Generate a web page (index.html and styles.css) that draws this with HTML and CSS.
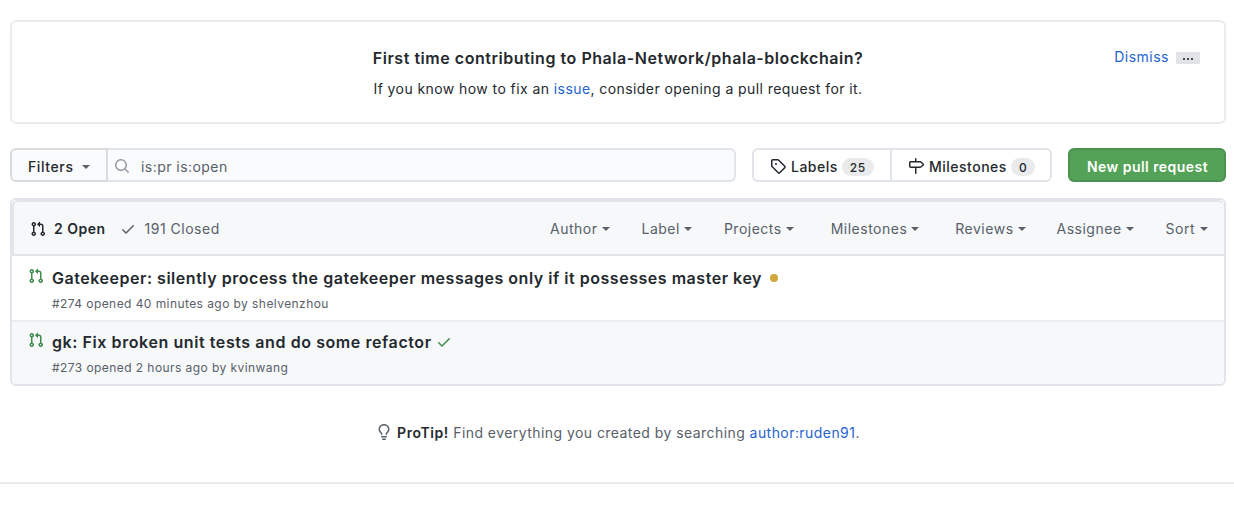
FILE: index.html
```
<!DOCTYPE html>
<html lang="en">
<head>
    <meta charset="UTF-8">
    <meta name="viewport" content="width=device-width, initial-scale=1.0">
    <title>Pull requests · Phala-Network/phala-blockchain</title>
    <link rel="stylesheet" href="styles.css">
</head>
<body>
    <!-- Shared icons -->
    <svg class="sprite" width="0" height="0">
        <symbol id="icon-pr" viewBox="0 0 16 16"><path fill-rule="evenodd" d="M7.177 3.073L9.573.677A.25.25 0 0110 .854v4.792a.25.25 0 01-.427.177L7.177 3.427a.25.25 0 010-.354zM3.75 2.5a.75.75 0 100 1.5.75.75 0 000-1.5zm-2.25.75a2.25 2.25 0 113 2.122v5.256a2.251 2.251 0 11-1.5 0V5.372A2.25 2.25 0 011.5 3.25zM11 2.5h-1V4h1a1 1 0 011 1v5.628a2.251 2.251 0 101.5 0V5A2.5 2.5 0 0011 2.5zm1 10.25a.75.75 0 111.5 0 .75.75 0 01-1.5 0zM3.75 12a.75.75 0 100 1.5.75.75 0 000-1.5z"/></symbol>
        <symbol id="icon-check" viewBox="0 0 16 16"><path fill-rule="evenodd" d="M13.78 4.22a.75.75 0 010 1.06l-7.25 7.25a.75.75 0 01-1.06 0L2.22 9.28a.75.75 0 011.06-1.06L6 10.94l6.72-6.72a.75.75 0 011.06 0z"/></symbol>
    </svg>

    <div class="container">
        <div class="notice">
            <h3 class="notice-title">First time contributing to Phala-Network/phala-blockchain?</h3>
            <p class="notice-text">If you know how to fix an <a href="#">issue</a>, consider opening a pull request for it.</p>
            <div class="notice-actions">
                <a href="#">Dismiss</a>
                <button type="button" class="expander" aria-label="More"><i></i><i></i><i></i></button>
            </div>
        </div>

        <div class="toolbar">
            <div class="search">
                <button type="button" class="btn-filters">Filters <span class="caret"></span></button>
                <div class="search-field">
                    <svg class="icon" viewBox="0 0 16 16"><path fill-rule="evenodd" d="M11.5 7a4.499 4.499 0 11-8.998 0A4.499 4.499 0 0111.5 7zm-.82 4.74a6 6 0 111.06-1.06l3.04 3.04a.75.75 0 11-1.06 1.06l-3.04-3.04z"/></svg>
                    <span class="search-text">is:pr is:open</span>
                </div>
            </div>

            <div class="subnav">
                <a class="subnav-item" href="#">
                    <svg class="icon" viewBox="0 0 16 16"><path fill-rule="evenodd" d="M2.5 7.775V2.75a.25.25 0 01.25-.25h5.025a.25.25 0 01.177.073l6.25 6.25a.25.25 0 010 .354l-5.025 5.025a.25.25 0 01-.354 0l-6.25-6.25a.25.25 0 01-.073-.177zm-1.5 0V2.75C1 1.784 1.784 1 2.75 1h5.025c.464 0 .91.184 1.238.513l6.25 6.25a1.75 1.75 0 010 2.474l-5.026 5.026a1.75 1.75 0 01-2.474 0l-6.25-6.25A1.75 1.75 0 011 7.775zM6 5a1 1 0 100 2 1 1 0 000-2z"/></svg>
                    <span class="subnav-label">Labels</span>
                    <span class="counter">25</span>
                </a>
                <a class="subnav-item" href="#">
                    <svg class="icon" viewBox="0 0 16 16"><path fill-rule="evenodd" d="M7.75 0a.75.75 0 01.75.75V3h3.634c.414 0 .814.147 1.13.414l2.07 1.75a1.75 1.75 0 010 2.672l-2.07 1.75a1.75 1.75 0 01-1.13.414H8.5v5.25a.75.75 0 11-1.5 0V10H2.75A1.75 1.75 0 011 8.25v-3.5C1 3.784 1.784 3 2.75 3H7V.75A.75.75 0 017.75 0zm0 8.5h4.384a.25.25 0 00.161-.06l2.07-1.75a.25.25 0 000-.38l-2.07-1.75a.25.25 0 00-.161-.06H2.75a.25.25 0 00-.25.25v3.5c0 .138.112.25.25.25h5z"/></svg>
                    <span class="subnav-label">Milestones</span>
                    <span class="counter">0</span>
                </a>
            </div>

            <a class="btn-primary" href="#">New pull request</a>
        </div>

        <div class="list">
            <div class="list-header">
                <a class="state state-open" href="#"><svg class="icon"><use href="#icon-pr"/></svg>2 Open</a>
                <a class="state" href="#"><svg class="icon"><use href="#icon-check"/></svg>191 Closed</a>
                <div class="filters">
                    <span class="filter">Author<span class="caret"></span></span>
                    <span class="filter">Label<span class="caret"></span></span>
                    <span class="filter">Projects<span class="caret"></span></span>
                    <span class="filter filter-milestones">Milestones<span class="caret"></span></span>
                    <span class="filter filter-reviews">Reviews<span class="caret"></span></span>
                    <span class="filter filter-assignee">Assignee<span class="caret"></span></span>
                    <span class="filter filter-sort">Sort<span class="caret"></span></span>
                </div>
            </div>

            <div class="row">
                <svg class="icon icon-open"><use href="#icon-pr"/></svg>
                <div class="row-body">
                    <div class="row-title"><a href="#">Gatekeeper: silently process the gatekeeper messages only if it possesses master key</a><span class="dot"></span></div>
                    <div class="row-meta">#274 opened 40 minutes ago by shelvenzhou</div>
                </div>
            </div>
            <div class="row row-active">
                <svg class="icon icon-open"><use href="#icon-pr"/></svg>
                <div class="row-body">
                    <div class="row-title"><a href="#">gk: Fix broken unit tests and do some refactor</a><svg class="icon icon-passed"><use href="#icon-check"/></svg></div>
                    <div class="row-meta">#273 opened 2 hours ago by kvinwang</div>
                </div>
            </div>
        </div>

        <div class="protip">
            <svg class="icon" viewBox="0 0 16 16"><path fill-rule="evenodd" d="M8 1.5c-2.363 0-4 1.69-4 3.75 0 .984.424 1.625.984 2.304l.214.253c.223.264.47.556.673.848.284.411.537.896.621 1.49a.75.75 0 01-1.484.211c-.04-.282-.163-.547-.37-.847a8.695 8.695 0 00-.542-.68c-.084-.1-.173-.205-.268-.32C3.201 7.75 2.5 6.766 2.5 5.25 2.5 2.31 4.863 0 8 0s5.5 2.31 5.5 5.25c0 1.516-.701 2.5-1.328 3.259-.095.115-.184.22-.268.319-.207.245-.383.453-.541.681-.208.3-.33.565-.37.847a.75.75 0 01-1.485-.212c.084-.593.337-1.078.621-1.489.203-.292.45-.584.673-.848.075-.088.147-.173.213-.253.561-.679.985-1.32.985-2.304 0-2.06-1.637-3.75-4-3.75zM6 15.25a.75.75 0 01.75-.75h2.5a.75.75 0 010 1.5h-2.5a.75.75 0 01-.75-.75zM5.75 12a.75.75 0 000 1.5h4.5a.75.75 0 000-1.5h-4.5z"/></svg>
            <p><strong>ProTip!</strong> Find everything you created by searching <a href="#">author:ruden91</a>.</p>
        </div>
    </div>

    <div class="footer-line"></div>
</body>
</html>
```
FILE: styles.css
```
* {
    margin: 0;
    padding: 0;
    box-sizing: border-box;
}

body {
    font-family: Inter, "Liberation Sans", sans-serif;
    font-size: 14px;
    line-height: 20px;
    letter-spacing: 0.5px;
    color: #24292e;
    background: #fff;
    overflow: hidden;
}

a {
    color: #2563d0;
    text-decoration: none;
}

button {
    font: inherit;
    letter-spacing: inherit;
    color: inherit;
}

.sprite {
    display: block;
}

.icon {
    width: 16px;
    height: 16px;
    flex: none;
    fill: currentColor;
}

.caret {
    flex: none;
    border: 4px solid transparent;
    border-top-color: currentColor;
    border-bottom: 0;
}

.container {
    padding: 20px 8px 0 10px;
}

/* First-time contributor notice */
.notice {
    position: relative;
    height: 104px;
    padding-top: 24px;
    border: 2px solid #ececee;
    border-radius: 6px;
    text-align: center;
}

.notice-title {
    font-size: 16px;
    font-weight: 600;
    line-height: 24px;
    letter-spacing: 0.54px;
}

.notice-text {
    margin-top: 9px;
    letter-spacing: 0.42px;
}

.notice-actions {
    position: absolute;
    top: 25px;
    right: 24px;
    display: flex;
    align-items: center;
    gap: 7px;
}

.expander {
    display: flex;
    align-items: center;
    justify-content: center;
    gap: 2px;
    width: 24px;
    height: 12px;
    padding-top: 2px;
    margin-top: 2px;
    border: 0;
    border-radius: 1px;
    background: #e1e3e7;
}

.expander i {
    width: 2px;
    height: 2px;
    background: #444a50;
}

/* Search and navigation */
.toolbar {
    display: flex;
    height: 34px;
    margin-top: 24px;
}

.search {
    display: flex;
    width: 726px;
}

.btn-filters {
    display: flex;
    align-items: center;
    gap: 8px;
    width: 98px;
    padding: 3px 0 0 16px;
    border: 2px solid #d9dbdd;
    border-radius: 6px 0 0 6px;
    background: #fafbfc;
    font-weight: 500;
    letter-spacing: 0.6px;
}

.btn-filters .caret {
    color: #5b6065;
}

.search-field {
    display: flex;
    flex: 1;
    align-items: center;
    padding-left: 6px;
    border: 2px solid #e1e4e8;
    border-left: 0;
    border-radius: 0 6px 6px 0;
    background: #fafbfc;
    color: #586069;
}

.search-field .icon {
    margin-top: 1px;
    color: #959da5;
}

.search-text {
    padding: 3px 0 0 11px;
    letter-spacing: 0.45px;
}

.subnav {
    display: flex;
    width: 300px;
    margin-left: 16px;
    border: 2px solid #e1e4e8;
    border-radius: 6px;
}

.subnav-item {
    display: flex;
    align-items: center;
    padding-left: 16px;
    color: #24292e;
    font-weight: 500;
}

.subnav-item:first-child {
    width: 138px;
    border-right: 2px solid #e1e4e8;
}

.subnav-item .icon {
    margin-top: 2px;
}

.subnav-label {
    padding: 3px 4px 0 5px;
}

.counter {
    height: 18px;
    padding: 0 8px;
    margin-top: 3px;
    border-radius: 9px;
    background: #e8eaec;
    font-size: 12px;
    line-height: 19px;
}

.btn-primary {
    width: 158px;
    margin-left: 16px;
    padding: 7px 0 0 1px;
    border: 2px solid #4b914f;
    border-radius: 6px;
    background: #54a257;
    color: #fff;
    font-weight: 600;
    letter-spacing: 0.45px;
    text-align: center;
}

/* Pull request list */
.list {
    margin-top: 16px;
    border: 2px solid #e1e4e8;
    border-radius: 6px;
    overflow: hidden;
}

.list-header {
    display: flex;
    align-items: center;
    height: 56px;
    padding: 1px 16px 0 16px;
    border: 2px solid #e1e4e8;
    border-right: 0;
    border-radius: 6px 6px 0 0;
    background: #f6f8fa;
}

.state {
    display: flex;
    align-items: center;
    gap: 9px;
    margin-right: 14px;
    color: #586069;
}

.state-open {
    gap: 8px;
    color: #24292e;
    font-weight: 600;
}

.filters {
    display: flex;
    margin-left: auto;
    color: #586069;
}

.filter {
    display: flex;
    align-items: center;
    gap: 4px;
    margin-left: 32px;
}

.filter-milestones {
    margin-left: 37px;
}

.filter-reviews {
    margin-left: 36px;
}

.filter-assignee {
    margin-left: 31px;
}

.filter-sort {
    gap: 5px;
}

.row {
    display: flex;
    height: 64px;
    padding: 12px 16px 0;
}

.row-active {
    border-top: 2px solid #eaecef;
    padding-top: 10px;
    background: #f6f8fa;
}

.icon-open,
.icon-passed {
    color: #3f8a4b;
}

.row-body {
    margin-top: -2px;
    margin-left: 8px;
}

.row-title {
    display: flex;
    align-items: center;
    font-size: 16px;
    font-weight: 600;
    line-height: 24px;
    letter-spacing: 0.53px;
}

.row-active .row-title {
    letter-spacing: 0.58px;
}

.row-title a {
    color: #24292e;
}

.icon-passed {
    margin-left: 4px;
}

.dot {
    width: 8px;
    height: 8px;
    margin-left: 8px;
    border-radius: 50%;
    background: #d1a938;
}

.row-meta {
    margin-top: 4px;
    color: #586069;
    font-size: 12px;
    letter-spacing: 0.43px;
}

.protip {
    display: flex;
    justify-content: center;
    gap: 5px;
    height: 20px;
    margin-top: 38px;
    color: #586069;
    letter-spacing: 0.44px;
}

.protip p {
    margin-top: -1px;
}

.protip strong {
    color: #24292e;
    font-weight: 600;
    letter-spacing: 0.55px;
}

.footer-line {
    margin-top: 38px;
    border-top: 2px solid #ececee;
}
```
